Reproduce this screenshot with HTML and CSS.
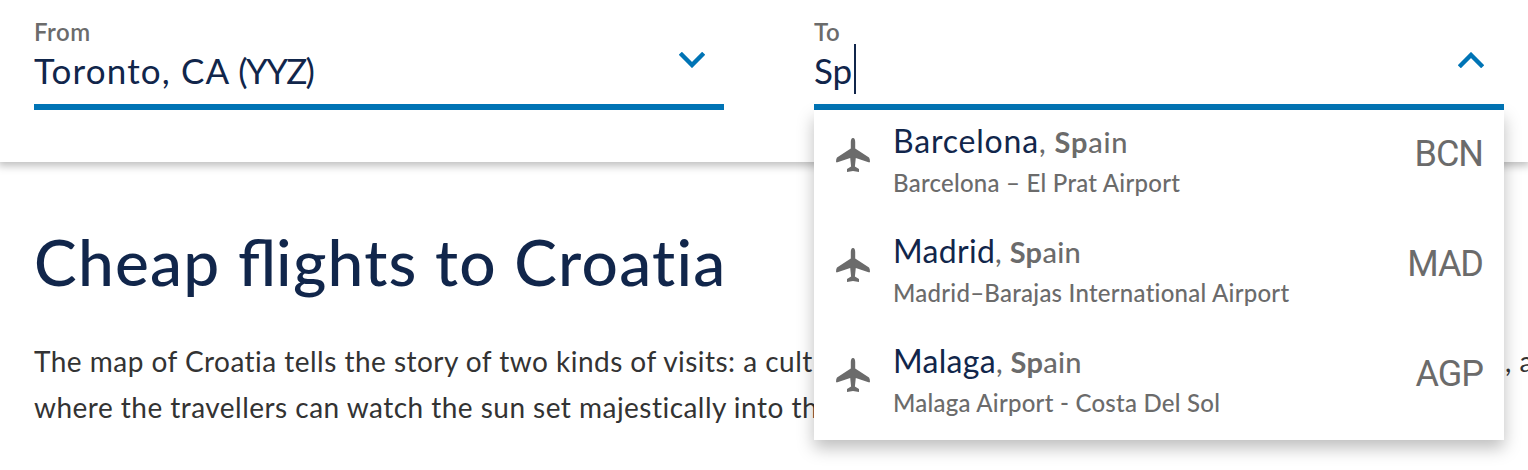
FILE: index.html
```html
<!DOCTYPE html>
<html lang="en">
<head>
  <meta charset="UTF-8">
  <meta name="viewport" content="width=device-width, initial-scale=1.0">
  <title>Cheap flights to Croatia</title>
  <link rel="stylesheet" href="styles.css">
</head>
<body>

<svg class="defs" width="0" height="0">
  <symbol id="plane" viewBox="0 0 34 34">
    <path d="M17 0C18.6 0 19.2 2 19.2 4V10.5L33 19.5Q34 20.5 34 24.2L32.5 24.2L19.8 20L18.9 28.5L23 31V34L17 33L11 34V31L15.1 28.5L14.2 20L1.5 24.2L0 24.2Q0 20.5 1 19.5L14.8 10.5V4C14.8 2 15.4 0 17 0Z"/>
  </symbol>
</svg>

<header class="search">
  <div class="field">
    <label class="field-label">From</label>
    <div class="field-value"><span class="field-city">Toronto, CA</span> <span class="field-code">(YYZ)</span></div>
    <svg class="chevron" viewBox="0 0 26 16"><path d="M1.3 1.3 13 13 24.7 1.3"/></svg>
  </div>

  <div class="field">
    <label class="field-label">To</label>
    <div class="field-value">Sp<span class="caret"></span></div>
    <svg class="chevron open" viewBox="0 0 26 16"><path d="M1.3 14.7 13 3 24.7 14.7"/></svg>

    <ul class="menu">
      <li class="option">
        <svg class="plane"><use href="#plane"/></svg>
        <div class="place">
          <div class="city wide">Barcelona<span class="country">, <b>Sp</b>ain</span></div>
          <div class="airport">Barcelona – El Prat Airport</div>
        </div>
        <div class="code">BCN</div>
      </li>
      <li class="option">
        <svg class="plane"><use href="#plane"/></svg>
        <div class="place">
          <div class="city">Madrid<span class="country">, <b>Sp</b>ain</span></div>
          <div class="airport">Madrid–Barajas International Airport</div>
        </div>
        <div class="code">MAD</div>
      </li>
      <li class="option">
        <svg class="plane"><use href="#plane"/></svg>
        <div class="place">
          <div class="city">Malaga<span class="country">, <b>Sp</b>ain</span></div>
          <div class="airport">Malaga Airport - Costa Del Sol</div>
        </div>
        <div class="code">AGP</div>
      </li>
    </ul>
  </div>
</header>

<main class="content">
  <h1>Cheap <span class="lig">fl</span>ights to Croatia</h1>
  <p>
    <span class="line"><span class="lead">The map of Croatia tells the story of two kinds of visits: a cult</span>, a</span>
    <span class="line">where the travellers can watch the sun set majestically into th</span>
  </p>
</main>

</body>
</html>
```
FILE: styles.css
```css
* {
  box-sizing: border-box;
}

body {
  font-family: Lato, "Open Sans", sans-serif;
  margin: 0;
  height: 470px;
  background-color: #fff;
  color: #333;
  overflow: hidden;
}

.defs {
  position: absolute;
}

.search {
  position: relative;
  z-index: 1;
  display: grid;
  grid-template-columns: 690px 690px;
  column-gap: 90px;
  align-items: start;
  height: 162px;
  padding: 16px 24px 0 34px;
  background-color: #fff;
  box-shadow: 0 2px 8px 2px rgba(0, 0, 0, 0.25);
}

.field {
  position: relative;
  height: 94px;
  border-bottom: 6px solid #0074b5;
}

.field-label {
  display: block;
  height: 28px;
  font-size: 24px;
  font-weight: 600;
  line-height: 31px;
  letter-spacing: 0.5px;
  color: #6b6b6b;
}

.field-value {
  display: flex;
  font-size: 35px;
  line-height: 52px;
  color: #11264b;
}

.field-city {
  letter-spacing: 1.15px;
}

.field-code {
  margin-left: 8px;
  letter-spacing: -1.8px;
}

.caret {
  width: 2px;
  height: 50px;
  margin-left: 2px;
  background-color: #11264b;
}

.chevron {
  position: absolute;
  top: 36px;
  right: 19px;
  width: 26px;
  height: 16px;
  fill: none;
  stroke: #0074b5;
  stroke-width: 4.4;
}

.chevron.open {
  right: 20px;
}

.menu {
  position: absolute;
  top: 94px;
  left: 0;
  width: 690px;
  margin: 0;
  padding: 0;
  list-style: none;
  background-color: #fff;
  box-shadow: 0 8px 16px rgba(0, 0, 0, 0.26);
}

.option {
  display: flex;
  align-items: flex-start;
  height: 110px;
  padding: 11px 21px 0 22px;
  color: #6b6b6b;
}

.plane {
  width: 34px;
  height: 34px;
  margin: 17px 23px 0 0;
  fill: #6b6b6b;
}

.place {
  flex: 1;
}

.city {
  font-size: 32px;
  line-height: 40px;
  letter-spacing: 0.3px;
  color: #11264b;
}

.city.wide {
  letter-spacing: 0.8px;
}

.country {
  font-size: 29px;
  font-weight: 500;
  color: #6b6b6b;
}

.airport {
  margin-top: 3px;
  font-size: 24px;
  font-weight: 500;
  line-height: 36px;
  letter-spacing: 0.25px;
}

.code {
  font-family: Roboto, sans-serif;
  font-size: 36px;
  line-height: 67px;
  letter-spacing: -1px;
}

.content {
  padding: 61px 34px 0;
}

h1 {
  margin: 0 0 37px;
  font-size: 64px;
  font-weight: 500;
  line-height: 78px;
  letter-spacing: 1.25px;
  color: #11264b;
}

.lig {
  letter-spacing: 0;
}

p {
  margin: 0;
  font-size: 28px;
  line-height: 46px;
  letter-spacing: 0.47px;
}

.line {
  display: block;
  white-space: nowrap;
}

.lead {
  display: inline-block;
  width: 1471px;
}
```
